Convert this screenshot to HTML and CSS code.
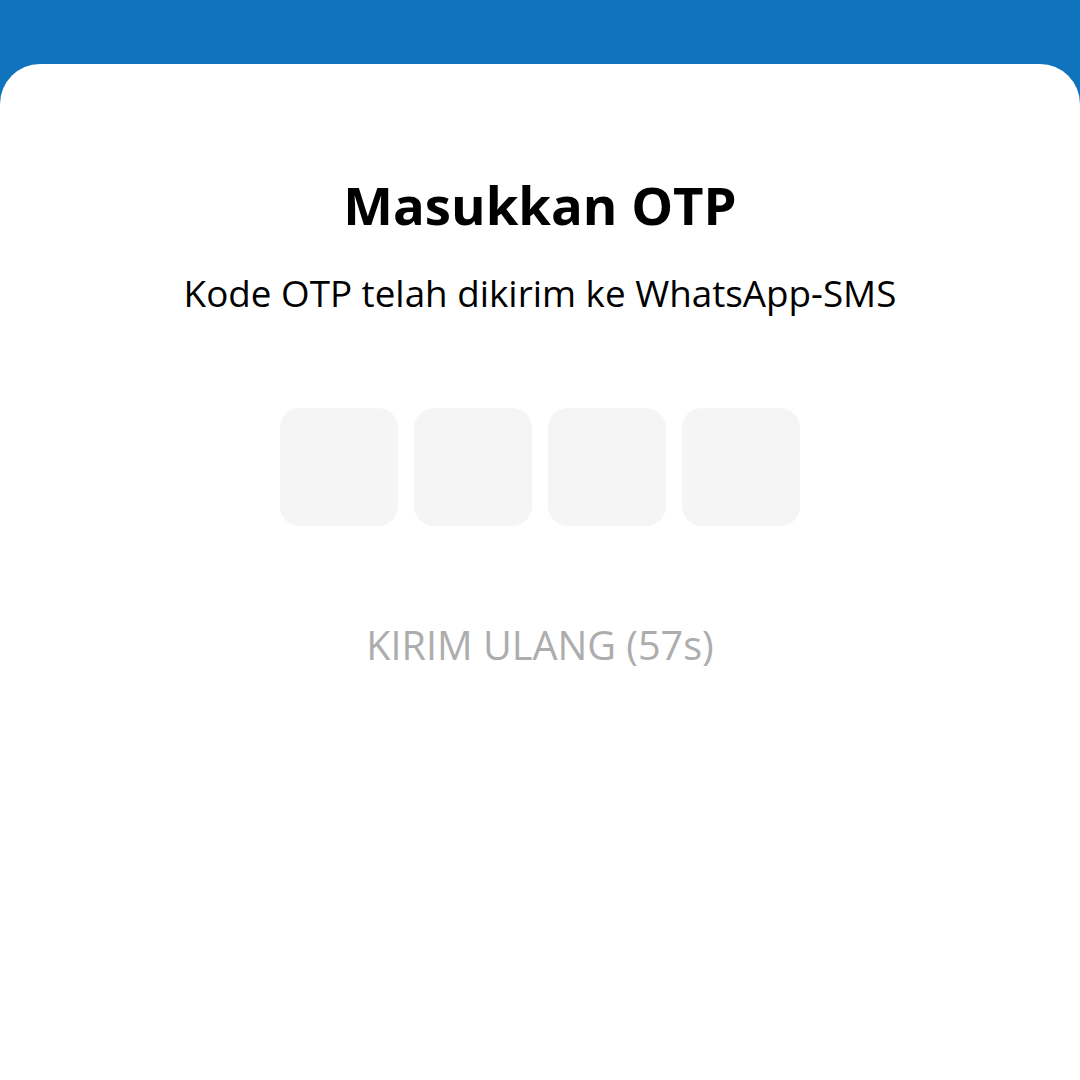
FILE: index.html
```html
<!DOCTYPE html>
<html lang="id">
<head>
    <meta charset="UTF-8">
    <meta name="viewport" content="width=device-width, initial-scale=1.0">
    <title>Masukkan OTP</title>
    <link rel="stylesheet" href="styles.css">
</head>
<body>
    <!-- Blue app bar behind the sheet -->
    <div class="top-bar"></div>

    <!-- OTP sheet -->
    <main class="sheet">
        <h1>Masukkan OTP</h1>
        <p class="subtitle">Kode OTP telah dikirim ke WhatsApp-SMS</p>

        <div class="otp-boxes">
            <input class="otp-box" type="text" maxlength="1" inputmode="numeric">
            <input class="otp-box" type="text" maxlength="1" inputmode="numeric">
            <input class="otp-box" type="text" maxlength="1" inputmode="numeric">
            <input class="otp-box" type="text" maxlength="1" inputmode="numeric">
        </div>

        <button class="resend" disabled>KIRIM ULANG (57s)</button>
    </main>
</body>
</html>
```

FILE: styles.css
```css
body {
    margin: 0;
    padding: 0;
    background-color: #0f73bd;
    font-family: 'Open Sans', sans-serif;
    color: #000;
}

.top-bar {
    height: 64px;
    background-color: #0f73bd;
}

.sheet {
    background-color: #fff;
    border-radius: 40px 40px 0 0;
    min-height: 1016px;
    display: flex;
    flex-direction: column;
    align-items: center;
    padding-top: 106px;
    box-sizing: border-box;
}

.sheet h1 {
    font-size: 52.7px;
    font-weight: 700;
    margin: 0;
    line-height: 70px;
}

.subtitle {
    font-size: 36.8px;
    margin: 28px 0 0;
    line-height: 50px;
}

.otp-boxes {
    display: flex;
    gap: 16px;
    margin-top: 90px;
}

.otp-box {
    width: 118px;
    height: 118px;
    border: none;
    border-radius: 20px;
    background-color: #f5f5f5;
    box-sizing: border-box;
    font-family: 'Open Sans', sans-serif;
    font-size: 48px;
    text-align: center;
    outline: none;
}

.resend {
    margin-top: 92px;
    background: none;
    border: none;
    padding: 0;
    font-family: 'Open Sans', sans-serif;
    font-size: 39.6px;
    line-height: 54px;
    color: #adadad;
}
```
